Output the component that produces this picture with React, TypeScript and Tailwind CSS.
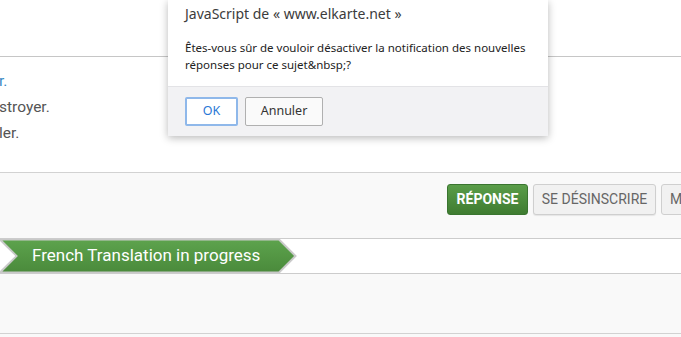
import type { ReactNode } from 'react'

const roboto = { fontFamily: 'Roboto, "Liberation Sans", sans-serif' }

function Crumb({ children }: { children: ReactNode }) {
  return (
    <div className="relative flex h-[34px] w-[298px] items-center pl-[32px]">
      <svg
        className="absolute inset-0"
        width="298"
        height="34"
        viewBox="0 0 298 34"
      >
        <defs>
          <linearGradient id="crumb" x1="0" y1="0" x2="0" y2="1">
            <stop offset="0" stopColor="#5da34d" />
            <stop offset="1" stopColor="#4a8a3b" />
          </linearGradient>
        </defs>
        <polygon
          points="0,0.5 279,0.5 295.5,17 279,33.5 0,33.5 16.5,17"
          fill="url(#crumb)"
          stroke="#c9c9c9"
          strokeWidth="2"
        />
        <polygon points="-2,1.5 15,17 -2,32.5" fill="#ffffff" />
      </svg>
      <span className="relative text-[17px] text-white" style={roboto}>
        {children}
      </span>
    </div>
  )
}

function JsDialog() {
  return (
    <div
      className="absolute left-[168px] top-0 w-[380px] bg-white shadow-[0_2px_8px_rgba(0,0,0,0.28)]"
      style={{ fontFamily: '"Noto Sans", "Open Sans", sans-serif' }}
    >
      <div className="px-[17px] pt-[3px] pb-[13px]">
        <p className="text-[14px] leading-[22px] text-[#3c3c3c]">
          JavaScript de « www.elkarte.net »
        </p>
        <p className="mt-[14px] text-[11.5px] leading-[17px] text-[#222]">
          Êtes-vous sûr de vouloir désactiver la notification des nouvelles
          réponses pour ce sujet&amp;nbsp;?
        </p>
      </div>
      <div className="flex gap-[7px] border-t border-[#e3e3e6] bg-[#f2f2f4] px-[17px] pt-[10px] pb-[10px]">
        <button
          type="button"
          className="h-[29px] w-[53px] rounded-[2px] border-2 border-[#8fb8ea] bg-white text-[12.5px] text-[#2a78d6]"
        >
          OK
        </button>
        <button
          type="button"
          className="h-[29px] w-[78px] rounded-[2px] border border-[#b0b0b0] bg-[#fafafa] text-[12.5px] text-[#333]"
        >
          Annuler
        </button>
      </div>
    </div>
  )
}

export default function App() {
  return (
    <div className="relative h-[337px] w-[681px] overflow-hidden bg-white" style={roboto}>
      <div className="h-[57px] border-b border-[#c6c6c6] bg-white" />

      <div className="h-[115px] bg-white pt-[11px] text-[15.5px] leading-[26px] text-[#555]">
        <p className="-ml-[1px] text-[#3a8ac4]">r.</p>
        <p className="-ml-[1px]">stroyer.</p>
        <p className="-ml-[1px]">ler.</p>
      </div>

      <div className="flex h-[66px] items-start justify-end gap-[5px] border-t border-[#d2d2d2] bg-[#f9f9f9] pt-[11px]">
        <button
          type="button"
          className="h-[31px] w-[81px] rounded-[3px] border border-[#3a7530] bg-gradient-to-b from-[#5a9d49] to-[#3f7c31] text-[14px] font-bold text-white"
        >
          RÉPONSE
        </button>
        <button
          type="button"
          className="h-[31px] w-[123px] rounded-[3px] border border-[#cfcfcf] bg-[#f1f1f1] text-[14px] text-[#666] shadow-[0_1px_1px_rgba(0,0,0,0.08)]"
        >
          SE DÉSINSCRIRE
        </button>
        <button
          type="button"
          className="-mr-[40px] h-[31px] w-[60px] overflow-hidden rounded-[3px] border border-[#cfcfcf] bg-[#f1f1f1] pl-[8px] text-left text-[14px] text-[#666]"
        >
          M
        </button>
      </div>

      <div className="h-[36px] border-y border-[#cccccc] bg-white">
        <Crumb>French Translation in progress</Crumb>
      </div>

      <div className="h-[60px] border-b border-[#d2d2d2] bg-[#f9f9f9]" />
      <div className="h-[10px] bg-[#f9f9f9]" />

      <JsDialog />
    </div>
  )
}
